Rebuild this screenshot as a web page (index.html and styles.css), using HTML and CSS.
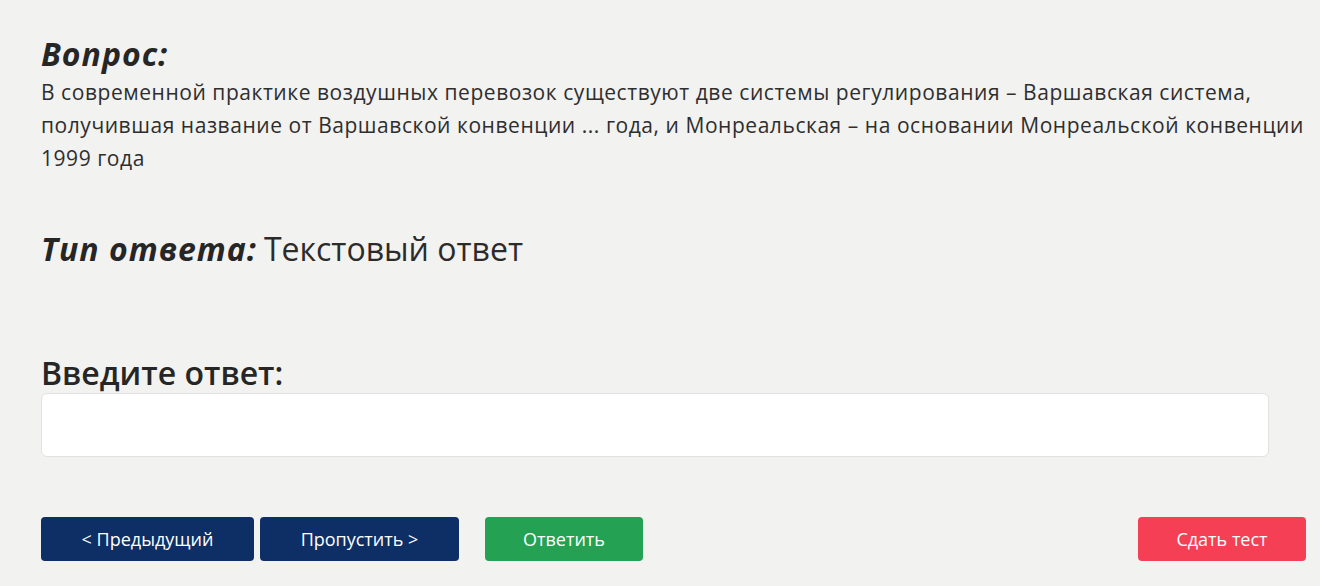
FILE: index.html
```html
<!DOCTYPE html>
<html lang="ru">

<head>
    <meta charset="UTF-8">
    <meta name="viewport" content="width=device-width, initial-scale=1.0">
    <title>Тест</title>
    <link rel="stylesheet" href="styles.css">
</head>

<body>
    <div class="page">
        <section class="question">
            <h2 class="label">Вопрос:</h2>
            <p class="question-text">В современной практике воздушных перевозок существуют две системы регулирования – Варшавская система, получившая название от Варшавской конвенции ... года, и Монреальская – на основании Монреальской конвенции 1999 года</p>
        </section>

        <div class="answer-type">
            <span class="label">Тип ответа:</span><span class="type-value">Текстовый ответ</span>
        </div>

        <section class="answer">
            <h3 class="answer-title">Введите ответ:</h3>
            <input type="text" class="answer-input">
        </section>

        <div class="controls">
            <button class="btn btn-nav btn-prev">&lt; Предыдущий</button>
            <button class="btn btn-nav btn-skip">Пропустить &gt;</button>
            <button class="btn btn-answer">Ответить</button>
            <button class="btn btn-finish">Сдать тест</button>
        </div>
    </div>
</body>

</html>
```

FILE: styles.css
```css
body {
    margin: 0;
    font-family: "Open Sans", "Noto Sans", sans-serif;
    background-color: #f2f2f0;
    color: #2b2b2b;
}
.page {
    padding: 32px 12px 0 41px;
}
.label {
    font-style: italic;
    font-weight: 700;
    font-size: 32px;
    letter-spacing: 1px;
    margin: 0;
    color: #262626;
}
.question .label { line-height: 44px; }
.question-text {
    margin: 0;
    font-size: 21px;
    letter-spacing: 0.55px;
    line-height: 33px;
    color: #2e2e2e;
}
.answer-type {
    margin-top: 52px;
    font-size: 32px;
    line-height: 44px;
}
.type-value { color: #2b2b2b; margin-left: 7px; }
.answer {
    margin-top: 82px;
    width: 1228px;
}
.answer-title {
    margin: 0;
    font-size: 32px;
    font-weight: 600;
    line-height: 40px;
    color: #262626;
}
.answer-input {
    display: block;
    box-sizing: border-box;
    width: 100%;
    height: 64px;
    background: #fff;
    border: 1px solid #e2e2e0;
    border-radius: 6px;
}
.controls {
    display: flex;
    margin-top: 60px;
    width: 1265px;
}
.btn {
    height: 44px;
    border: none;
    border-radius: 4px;
    color: #fff;
    font-family: inherit;
    font-size: 18px;
}
.btn-nav { background-color: #0d2f66; }
.btn-prev { width: 213px; }
.btn-skip { width: 199px; margin-left: 6px; }
.btn-answer { width: 158px; margin-left: 26px; background-color: #24a152; }
.btn-finish { width: 168px; margin-left: auto; background-color: #f43f55; }
```
